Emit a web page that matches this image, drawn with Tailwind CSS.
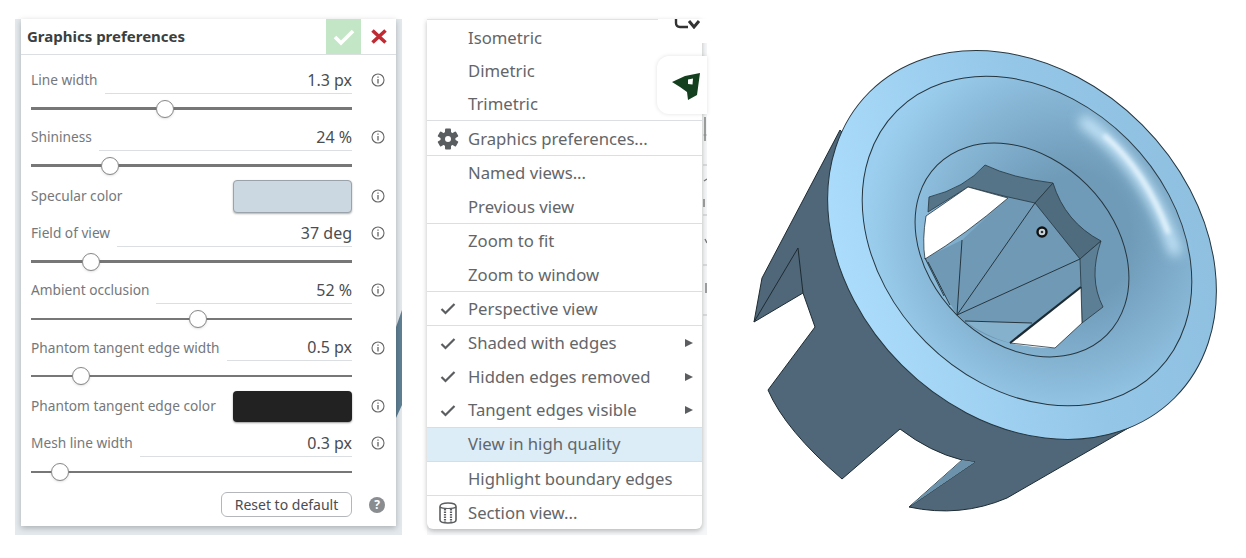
<!DOCTYPE html>
<html lang="en">
<head>
<meta charset="UTF-8">
<title>Graphics preferences</title>
<script src="https://cdn.jsdelivr.net/npm/@tailwindcss/browser@4"></script>
</head>
<body class="bg-white font-['Noto_Sans',sans-serif] overflow-hidden">
<div class="flex h-[558px] w-[1246px] items-start">

  <!-- graphics preferences panel -->
  <div class="relative mt-[19px] ml-[15px] w-[387px] h-[516px] bg-[#e3e9ed] px-[6px]">
    <svg class="absolute left-[381px] top-[291px]" width="6" height="108" viewBox="0 0 6 108"><path d="M0 17L6 0V95L0 108Z" fill="#5f7f94"/></svg>
    <div class="relative h-[507px] bg-white shadow-[0_2px_6px_rgba(0,0,0,0.25)]">
      <!-- header -->
      <div class="flex h-[36px] items-stretch border-b border-[#dcdfe1]">
        <div class="flex-1 pl-[6px] flex items-center text-[15px] font-bold text-[#3c3f41]">Graphics preferences</div>
        <div class="w-[35px] bg-[#c3e6c6] flex items-center justify-center">
          <svg width="22" height="18" viewBox="0 0 22 18"><path d="M2 9L8 15L20 3" fill="none" stroke="#fff" stroke-width="3.6"/></svg>
        </div>
        <div class="w-[35px] flex items-center justify-center">
          <svg width="16" height="15" viewBox="0 0 16 15"><path d="M1.5 1.5L14.5 13.5M14.5 1.5L1.5 13.5" fill="none" stroke="#bf2a33" stroke-width="3.6"/></svg>
        </div>
      </div>

      <div class="pl-[10px] pt-[11px] w-[364px] text-[13.7px] text-[#75787b]">
        <!-- Line width -->
        <div class="h-[57px]">
          <div class="flex h-[28px] items-center">
            <span>Line width</span>
            <div class="ml-[7px] flex-1 h-full flex items-center justify-end border-b border-[#dcdfe1] text-[16px] text-[#4a4d50]">1.3 px</div>
            <div class="w-[33px] flex justify-end"><svg width="14" height="14" viewBox="0 0 14 14"><circle cx="7" cy="7" r="6" fill="none" stroke="#666" stroke-width="1.1"/><path d="M7 3.5V4.8M7 6V10.5" stroke="#666" stroke-width="1.3"/></svg></div>
          </div>
          <div class="relative mt-[13px] h-[3px] w-[321px] bg-[#777]"><div class="absolute left-[125px] top-[-7px] w-[18px] h-[18px] rounded-full bg-white border border-[#888] shadow-sm"></div></div>
        </div>
        <!-- Shininess -->
        <div class="h-[53px]">
          <div class="flex h-[28px] items-center">
            <span>Shininess</span>
            <div class="ml-[7px] flex-1 h-full flex items-center justify-end border-b border-[#dcdfe1] text-[16px] text-[#4a4d50]">24 %</div>
            <div class="w-[33px] flex justify-end"><svg width="14" height="14" viewBox="0 0 14 14"><circle cx="7" cy="7" r="6" fill="none" stroke="#666" stroke-width="1.1"/><path d="M7 3.5V4.8M7 6V10.5" stroke="#666" stroke-width="1.3"/></svg></div>
          </div>
          <div class="relative mt-[13px] h-[3px] w-[321px] bg-[#777]"><div class="absolute left-[70px] top-[-7px] w-[18px] h-[18px] rounded-full bg-white border border-[#888] shadow-sm"></div></div>
        </div>
        <!-- Specular color -->
        <div class="flex h-[43px] items-center pb-[3px]">
          <span class="flex-1">Specular color</span>
          <div class="w-[119px] h-[33px] rounded-[4px] bg-[#cbd8e2] border border-[#9aa3aa] shadow-[0_1px_2px_rgba(0,0,0,0.3)]"></div>
          <div class="w-[33px] flex justify-end"><svg width="14" height="14" viewBox="0 0 14 14"><circle cx="7" cy="7" r="6" fill="none" stroke="#666" stroke-width="1.1"/><path d="M7 3.5V4.8M7 6V10.5" stroke="#666" stroke-width="1.3"/></svg></div>
        </div>
        <!-- Field of view -->
        <div class="h-[57px]">
          <div class="flex h-[28px] items-center">
            <span>Field of view</span>
            <div class="ml-[7px] flex-1 h-full flex items-center justify-end border-b border-[#dcdfe1] text-[16px] text-[#4a4d50]">37 deg</div>
            <div class="w-[33px] flex justify-end"><svg width="14" height="14" viewBox="0 0 14 14"><circle cx="7" cy="7" r="6" fill="none" stroke="#666" stroke-width="1.1"/><path d="M7 3.5V4.8M7 6V10.5" stroke="#666" stroke-width="1.3"/></svg></div>
          </div>
          <div class="relative mt-[13px] h-[3px] w-[321px] bg-[#777]"><div class="absolute left-[51px] top-[-7px] w-[18px] h-[18px] rounded-full bg-white border border-[#888] shadow-sm"></div></div>
        </div>
        <!-- Ambient occlusion -->
        <div class="h-[58px]">
          <div class="flex h-[28px] items-center">
            <span>Ambient occlusion</span>
            <div class="ml-[7px] flex-1 h-full flex items-center justify-end border-b border-[#dcdfe1] text-[16px] text-[#4a4d50]">52 %</div>
            <div class="w-[33px] flex justify-end"><svg width="14" height="14" viewBox="0 0 14 14"><circle cx="7" cy="7" r="6" fill="none" stroke="#666" stroke-width="1.1"/><path d="M7 3.5V4.8M7 6V10.5" stroke="#666" stroke-width="1.3"/></svg></div>
          </div>
          <div class="relative mt-[14px] h-[2px] w-[321px] bg-[#777]"><div class="absolute left-[158px] top-[-8px] w-[18px] h-[18px] rounded-full bg-white border border-[#888] shadow-sm"></div></div>
        </div>
        <!-- Phantom tangent edge width -->
        <div class="h-[52px]">
          <div class="flex h-[27px] items-center">
            <span class="mt-[1px]">Phantom tangent edge width</span>
            <div class="ml-[7px] flex-1 h-full flex items-center justify-end border-b border-[#dcdfe1] text-[16px] text-[#4a4d50]">0.5 px</div>
            <div class="w-[33px] flex justify-end"><svg width="14" height="14" viewBox="0 0 14 14"><circle cx="7" cy="7" r="6" fill="none" stroke="#666" stroke-width="1.1"/><path d="M7 3.5V4.8M7 6V10.5" stroke="#666" stroke-width="1.3"/></svg></div>
          </div>
          <div class="relative mt-[14px] h-[2px] w-[321px] bg-[#777]"><div class="absolute left-[41px] top-[-8px] w-[18px] h-[18px] rounded-full bg-white border border-[#888] shadow-sm"></div></div>
        </div>
        <!-- Phantom tangent edge color -->
        <div class="flex h-[43px] items-center pb-[3px]">
          <span class="flex-1">Phantom tangent edge color</span>
          <div class="w-[119px] h-[31px] rounded-[4px] bg-[#222] shadow-[0_1px_2px_rgba(0,0,0,0.4)]"></div>
          <div class="w-[33px] flex justify-end"><svg width="14" height="14" viewBox="0 0 14 14"><circle cx="7" cy="7" r="6" fill="none" stroke="#666" stroke-width="1.1"/><path d="M7 3.5V4.8M7 6V10.5" stroke="#666" stroke-width="1.3"/></svg></div>
        </div>
        <!-- Mesh line width -->
        <div class="h-[63px]">
          <div class="flex h-[28px] items-center">
            <span>Mesh line width</span>
            <div class="ml-[7px] flex-1 h-full flex items-center justify-end border-b border-[#dcdfe1] text-[16px] text-[#4a4d50]">0.3 px</div>
            <div class="w-[33px] flex justify-end"><svg width="14" height="14" viewBox="0 0 14 14"><circle cx="7" cy="7" r="6" fill="none" stroke="#666" stroke-width="1.1"/><path d="M7 3.5V4.8M7 6V10.5" stroke="#666" stroke-width="1.3"/></svg></div>
          </div>
          <div class="relative mt-[14px] h-[2px] w-[321px] bg-[#777]"><div class="absolute left-[20px] top-[-8px] w-[18px] h-[18px] rounded-full bg-white border border-[#888] shadow-sm"></div></div>
        </div>
        <!-- footer -->
        <div class="flex items-center justify-end">
          <div class="w-[131px] h-[25px] rounded-[6px] border border-[#b4b7ba] flex items-center justify-center text-[14px] text-[#4a4d50]">Reset to default</div>
          <div class="w-[33px] flex justify-end">
            <div class="w-[16px] h-[16px] rounded-full bg-[#8a8d90] flex items-center justify-center text-[12px] leading-none font-bold text-white">?</div>
          </div>
        </div>
      </div>
    </div>
  </div>

  <!-- view menu -->
  <div class="relative mt-[19px] ml-[25px] w-[280px] h-[516px] bg-[#f4f6f7]">
    <div class="relative w-[275px] h-[510px] bg-white rounded-b-[6px] shadow-[0_2px_5px_rgba(0,0,0,0.25)] border-t border-[#dfe3e6] text-[16.7px] text-[#636669]">
      <div class="h-[33px] pl-[41px] pt-[2px] flex items-center">Isometric</div>
      <div class="h-[34px] pl-[41px] pt-[2px] flex items-center">Dimetric</div>
      <div class="h-[34px] pl-[41px] flex items-center border-b border-[#dcdfe1]">Trimetric</div>
      <div class="h-[35px] pt-[1px] flex items-center border-b border-[#dcdfe1]">
        <div class="w-[41px] flex justify-center pl-[1px]">
          <svg width="22" height="22" viewBox="0 0 22 22" fill="#5b5e60">
            <rect x="8" y="0.5" width="6" height="21" rx="1"/>
            <rect x="8" y="0.5" width="6" height="21" rx="1" transform="rotate(60 11 11)"/>
            <rect x="8" y="0.5" width="6" height="21" rx="1" transform="rotate(120 11 11)"/>
            <circle cx="11" cy="11" r="7.5"/>
            <circle cx="11" cy="11" r="3" fill="#fff"/>
          </svg>
        </div>
        Graphics preferences...
      </div>
      <div class="h-[34px] pl-[41px] flex items-center">Named views...</div>
      <div class="h-[34px] pl-[41px] flex items-center border-b border-[#dcdfe1]">Previous view</div>
      <div class="h-[34px] pl-[41px] flex items-center">Zoom to fit</div>
      <div class="h-[34px] pl-[41px] flex items-center border-b border-[#dcdfe1]">Zoom to window</div>
      <div class="h-[34px] flex items-center border-b border-[#dcdfe1]">
        <div class="w-[41px] flex justify-center"><svg width="16" height="13" viewBox="0 0 16 13"><path d="M1.5 7L5.5 11L14.5 2" fill="none" stroke="#5b5e60" stroke-width="2.2"/></svg></div>
        Perspective view
      </div>
      <div class="h-[34px] flex items-center">
        <div class="w-[41px] flex justify-center"><svg width="16" height="13" viewBox="0 0 16 13"><path d="M1.5 7L5.5 11L14.5 2" fill="none" stroke="#5b5e60" stroke-width="2.2"/></svg></div>
        <span class="flex-1">Shaded with edges</span>
        <svg class="mr-[9px]" width="8" height="8" viewBox="0 0 8 8"><path d="M0 0L8 4L0 8Z" fill="#5b5e60"/></svg>
      </div>
      <div class="h-[33px] flex items-center">
        <div class="w-[41px] flex justify-center"><svg width="16" height="13" viewBox="0 0 16 13"><path d="M1.5 7L5.5 11L14.5 2" fill="none" stroke="#5b5e60" stroke-width="2.2"/></svg></div>
        <span class="flex-1">Hidden edges removed</span>
        <svg class="mr-[9px]" width="8" height="8" viewBox="0 0 8 8"><path d="M0 0L8 4L0 8Z" fill="#5b5e60"/></svg>
      </div>
      <div class="h-[34px] flex items-center">
        <div class="w-[41px] flex justify-center"><svg width="16" height="13" viewBox="0 0 16 13"><path d="M1.5 7L5.5 11L14.5 2" fill="none" stroke="#5b5e60" stroke-width="2.2"/></svg></div>
        <span class="flex-1">Tangent edges visible</span>
        <svg class="mr-[9px]" width="8" height="8" viewBox="0 0 8 8"><path d="M0 0L8 4L0 8Z" fill="#5b5e60"/></svg>
      </div>
      <div class="h-[35px] pl-[41px] pb-[2px] flex items-center bg-[#dcedf8] border-y border-[#d3dfe6]">View in high quality</div>
      <div class="h-[34px] pl-[41px] flex items-center border-b border-[#dcdfe1]">Highlight boundary edges</div>
      <div class="h-[34px] flex items-center">
        <div class="w-[41px] flex justify-center">
          <svg width="20" height="22" viewBox="0 0 20 22" fill="none" stroke="#5b5e60">
            <path d="M2 4.5C2 2.5 5 1 10 1S18 2.5 18 4.5V18C18 20 15 21 10 21S2 20 2 18Z" stroke-width="1.6"/>
            <path d="M2 5C4 7 16 7 18 5" stroke-width="1.2"/>
            <path d="M7 7V20M13 7V20" stroke-width="2.2" stroke-dasharray="1.5 1"/>
          </svg>
        </div>
        Section view...
      </div>
    </div>

    <!-- toolbar buttons behind the menu corner -->
    <div class="absolute left-[231px] top-0 w-[49px] h-[24px] bg-white rounded-bl-[10px] overflow-hidden">
      <svg class="absolute left-[16px] top-0" width="28" height="10" viewBox="0 0 28 10" fill="none" stroke="#333" stroke-width="2.4"><path d="M2 0V4Q2 8 6 8H14"/><path d="M15 2L20 8L25 2" stroke-width="3"/></svg>
    </div>
    <div class="absolute left-[230px] top-[37px] w-[50px] h-[58px] bg-white rounded-l-[12px] shadow-[0_0_4px_rgba(0,0,0,0.12)]">
      <svg class="absolute left-[14px] top-[15px]" width="30" height="30" viewBox="0 0 30 30"><path d="M1 11L14 5L29 2L26 24L17 29L16 21L9 16Z" fill="#15401f"/><path d="M17 8.5L22 7.5L21.5 13.5L17 13Z" fill="#fff"/></svg>
    </div>
    <svg class="absolute left-[275px] top-[96px]" width="5" height="210" viewBox="0 0 5 210" fill="none" stroke="#777" stroke-width="1">
      <path d="M1 20H5M1 50H5M1 100H5M1 150H5M1 200H5" stroke="#bbb"/>
      <path d="M3 2V26M2 66L5 64M2 84V92M3 124L5 128M4 168V178" stroke-width="1.4"/>
    </svg>
  </div>

  <!-- 3d part -->
  <svg class="ml-[1px] shrink-0" width="538" height="558" viewBox="708 0 538 558">
    <defs>
      <linearGradient id="flange" x1="0.2" y1="0.9" x2="0.8" y2="0.1">
        <stop offset="0" stop-color="#abdcfb"/>
        <stop offset="0.6" stop-color="#94c6e8"/>
        <stop offset="1" stop-color="#8fc0e0"/>
      </linearGradient>
      <radialGradient id="bowl" gradientUnits="userSpaceOnUse" cx="1050" cy="205" r="205">
        <stop offset="0.3" stop-color="#6f9bb8"/>
        <stop offset="0.6" stop-color="#82b0cf"/>
        <stop offset="1" stop-color="#9ccfef"/>
      </radialGradient>
      <filter id="soft" x="-30%" y="-30%" width="160%" height="160%"><feGaussianBlur stdDeviation="2"/></filter>
      <filter id="wide" x="-30%" y="-30%" width="160%" height="160%"><feGaussianBlur stdDeviation="6"/></filter>
    </defs>

    <!-- outer body with tabs -->
    <path d="M840 130L762 278L754 322L803 293L815 327L768 390Q785 430 842 479L900 429Q930 452 962 460L975 462L909 507Q960 518 1007 498L1137 423L1000 300Z" fill="#4f6778" stroke="#1d2b33" stroke-width="1"/>
    <path d="M798 248L754 322M798 248L803 293M962 460L909 507" fill="none" stroke="#1d2b33" stroke-width="1"/>
    <path d="M962 460L975 462L909 507Z" fill="#6d93ac"/>

    <!-- flange faces -->
    <ellipse cx="1022" cy="245" rx="216" ry="170" transform="rotate(45 1022 245)" fill="url(#flange)" stroke="#26363f" stroke-width="1"/>
    <ellipse cx="1027" cy="241" rx="184" ry="143" transform="rotate(45 1027 241)" fill="url(#bowl)" stroke="#26363f" stroke-width="1"/>
    <path d="M1085 122Q1146 165 1175 250" fill="none" stroke="#c8e8fb" stroke-width="12" stroke-linecap="round" filter="url(#wide)"/>
    <path d="M1105 136Q1146 172 1168 232" fill="none" stroke="#eef9ff" stroke-width="4" stroke-linecap="round" filter="url(#soft)"/>
    <ellipse cx="1022" cy="250" rx="120" ry="92" transform="rotate(45 1022 250)" fill="url(#bowl)" stroke="#26363f" stroke-width="1"/>

    <!-- hole floor and walls -->
    <path d="M925 258L962 240L1008 198L1035 203L1080 259L1081 287L1010 343Q975 335 955 312Z" fill="#7099b5"/>
    <path d="M965 321L1032 323L1010 343Q985 336 965 321Z" fill="#86b1cd"/>
    <path d="M985 165Q1012 178 1053 183L1035 203L1008 197L968 187L928 212L929 197Q965 188 985 165Z" fill="#557488" stroke="#26363f" stroke-width="0.8"/>
    <path d="M1053 183Q1065 222 1101 241L1080 259L1035 203Z" fill="#4f6b7e" stroke="#26363f" stroke-width="0.8"/>
    <path d="M1101 241Q1088 278 1103 307L1082 323L1081 287L1080 259Z" fill="#5d7f95" stroke="#26363f" stroke-width="0.8"/>
    <!-- openings -->
    <path d="M968 187L1008 198Q965 235 925 259Q922 240 926 216Z" fill="#fff" stroke="#26363f" stroke-width="0.8"/>
    <path d="M1081 287L1082 323L1055 348Q1030 348 1010 343Z" fill="#fff"/>
    <path d="M1081 287L1010 343" stroke="#1d2b33" stroke-width="2.2"/>
    <path d="M1082 323L1055 348M1010 343L1055 348M1081 287L1082 323" stroke="#26363f" stroke-width="0.8"/>
    <!-- mesh lines -->
    <path d="M957 315L1035 203M957 315L1080 259M957 315L962 240M965 321L1032 323M925 258L944 296M928 262L950 305" fill="none" stroke="#26363f" stroke-width="1"/>
    <!-- origin marker -->
    <circle cx="1042" cy="232" r="4.5" fill="#c9d6dd" stroke="#111" stroke-width="2.4"/>
    <circle cx="1042" cy="232" r="1.3" fill="#333"/>
  </svg>
</div>
</body>
</html>
